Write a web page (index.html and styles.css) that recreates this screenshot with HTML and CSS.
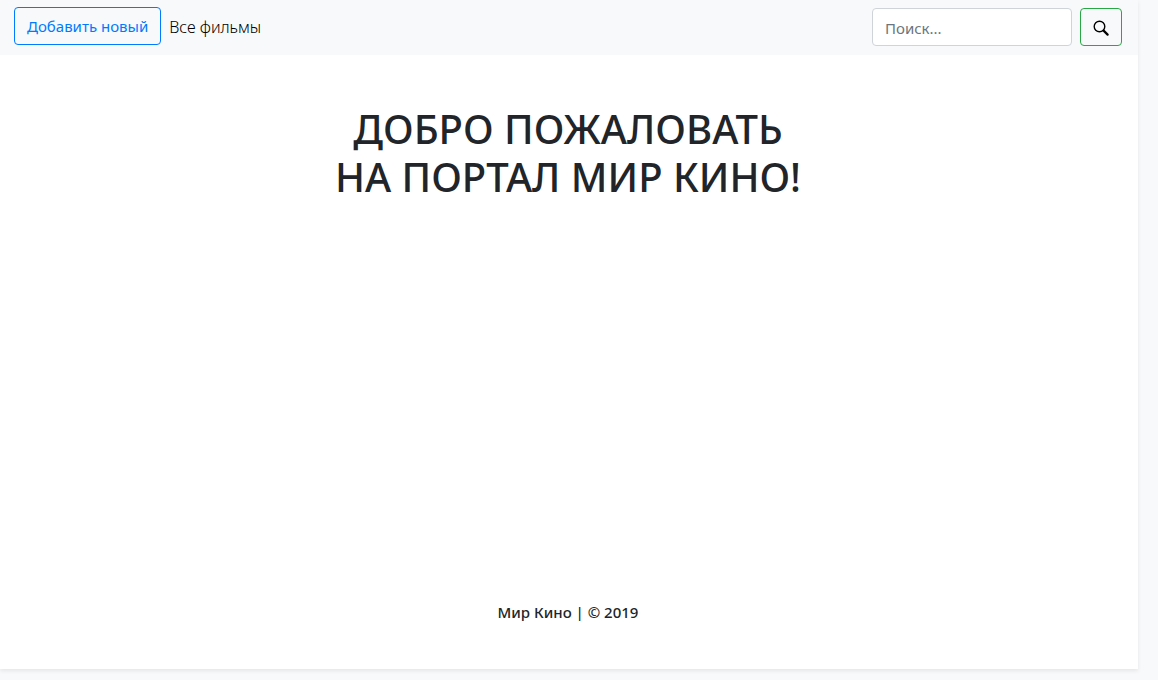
FILE: index.html
```html
<!DOCTYPE html>
<html lang="ru">
<head>
<meta charset="utf-8">
<meta name="viewport" content="width=device-width, initial-scale=1">
<title>Мир Кино</title>
<link rel="stylesheet" href="styles.css">
</head>
<body>
<div class="page">
  <header class="navbar">
    <nav class="nav">
      <a class="btn btn-primary" href="#">Добавить новый</a>
      <a class="nav-link" href="#">Все фильмы</a>
    </nav>
    <form class="search" role="search">
      <input class="search-input" type="search" placeholder="Поиск..." aria-label="Поиск">
      <button class="btn btn-search" type="submit" aria-label="Найти">
        <svg class="icon" viewBox="0 0 16 16" fill="none" stroke="#000" aria-hidden="true">
          <circle cx="6.5" cy="6.5" r="5.3" stroke-width="1.4"/>
          <path d="M10.6 10.6 14.6 14.6" stroke-width="2.2" stroke-linecap="round"/>
        </svg>
      </button>
    </form>
  </header>
  <main class="main">
    <h1 class="title">ДОБРО ПОЖАЛОВАТЬ<br>НА ПОРТАЛ МИР КИНО!</h1>
  </main>
  <footer class="footer">Мир Кино | © 2019</footer>
</div>
</body>
</html>
```
FILE: styles.css
```css
* {
  box-sizing: border-box;
}

body {
  margin: 0;
  padding: 0 20px 11px 0;
  min-height: 100vh;
  display: flex;
  background: #f8f9fa;
  color: #212529;
  font: 15px/24px "Segoe UI", "Noto Sans", "Open Sans", sans-serif;
}

.page {
  flex: 1;
  display: flex;
  flex-direction: column;
  background: #fff;
  box-shadow: 0 2px 4px rgba(0, 0, 0, 0.08);
}

.navbar {
  display: flex;
  justify-content: space-between;
  align-items: flex-start;
  padding: 7px 16px 9px 14px;
  background: #f8f9fa;
}

.nav,
.search {
  display: flex;
  align-items: center;
  gap: 8px;
}

.search {
  padding-top: 1px;
}

.btn {
  height: 38px;
  padding: 6px 12px;
  border: 1px solid;
  border-radius: 4px;
  background: transparent;
  line-height: 24px;
  text-decoration: none;
}

.btn-primary {
  border-color: #007bff;
  color: #007bff;
}

.nav-link {
  padding-top: 2px;
  color: #000;
  font-size: 16px;
  font-weight: 300;
  text-decoration: none;
}

.search-input {
  width: 200px;
  height: 38px;
  padding: 7px 12px 5px;
  border: 1px solid #ced4da;
  border-radius: 4px;
  background: #fff;
  color: #495057;
  font: inherit;
}

.search-input::placeholder {
  color: #6c757d;
  opacity: 1;
}

.btn-search {
  display: flex;
  align-items: center;
  padding: 8px 12px 6px;
  border-color: #28a745;
}

.icon {
  width: 16px;
  height: 16px;
}

.main {
  flex: 1;
  padding: 50px 18px 50px 16px;
}

.title {
  margin: 0;
  font-size: 40px;
  line-height: 48px;
  font-weight: 500;
  text-align: center;
}

.footer {
  padding: 0 18px 45px 16px;
  font-weight: 500;
  text-align: center;
}
```
